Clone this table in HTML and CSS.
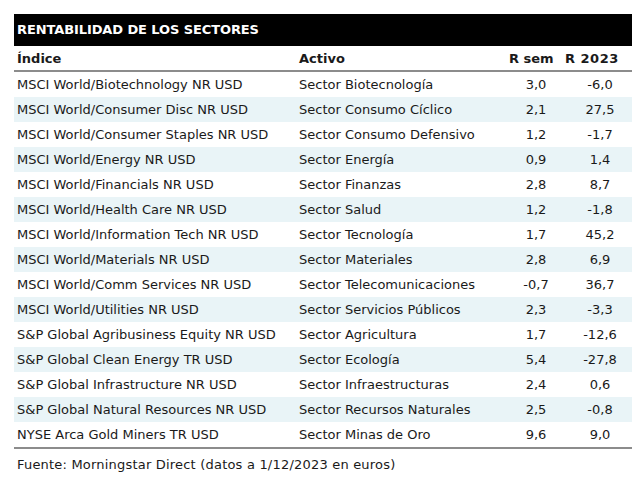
FILE: index.html
```html
<!DOCTYPE html>
<html lang="es">
<head>
<meta charset="utf-8">
<link rel="stylesheet" href="styles.css">
</head>
<body>
<div class="wrap">
  <div class="title">RENTABILIDAD DE LOS SECTORES</div>
  <table class="tbl">
    <colgroup>
      <col class="w1"><col class="w2"><col class="w3"><col class="w4">
    </colgroup>
    <thead>
      <tr><th class="c1">Índice</th><th class="c2">Activo</th><th class="c3">R sem</th><th class="c4">R 2023</th></tr>
    </thead>
    <tbody>
      <tr><td class="c1">MSCI World/Biotechnology NR USD</td><td class="c2">Sector Biotecnología</td><td class="c3">3,0</td><td class="c4">-6,0</td></tr>
      <tr><td class="c1">MSCI World/Consumer Disc NR USD</td><td class="c2">Sector Consumo Cíclico</td><td class="c3">2,1</td><td class="c4">27,5</td></tr>
      <tr><td class="c1">MSCI World/Consumer Staples NR USD</td><td class="c2">Sector Consumo Defensivo</td><td class="c3">1,2</td><td class="c4">-1,7</td></tr>
      <tr><td class="c1">MSCI World/Energy NR USD</td><td class="c2">Sector Energía</td><td class="c3">0,9</td><td class="c4">1,4</td></tr>
      <tr><td class="c1">MSCI World/Financials NR USD</td><td class="c2">Sector Finanzas</td><td class="c3">2,8</td><td class="c4">8,7</td></tr>
      <tr><td class="c1">MSCI World/Health Care NR USD</td><td class="c2">Sector Salud</td><td class="c3">1,2</td><td class="c4">-1,8</td></tr>
      <tr><td class="c1">MSCI World/Information Tech NR USD</td><td class="c2">Sector Tecnología</td><td class="c3">1,7</td><td class="c4">45,2</td></tr>
      <tr><td class="c1">MSCI World/Materials NR USD</td><td class="c2">Sector Materiales</td><td class="c3">2,8</td><td class="c4">6,9</td></tr>
      <tr><td class="c1">MSCI World/Comm Services NR USD</td><td class="c2">Sector Telecomunicaciones</td><td class="c3">-0,7</td><td class="c4">36,7</td></tr>
      <tr><td class="c1">MSCI World/Utilities NR USD</td><td class="c2">Sector Servicios Públicos</td><td class="c3">2,3</td><td class="c4">-3,3</td></tr>
      <tr><td class="c1">S&amp;P Global Agribusiness Equity NR USD</td><td class="c2">Sector Agricultura</td><td class="c3">1,7</td><td class="c4">-12,6</td></tr>
      <tr><td class="c1">S&amp;P Global Clean Energy TR USD</td><td class="c2">Sector Ecología</td><td class="c3">5,4</td><td class="c4">-27,8</td></tr>
      <tr><td class="c1">S&amp;P Global Infrastructure NR USD</td><td class="c2">Sector Infraestructuras</td><td class="c3">2,4</td><td class="c4">0,6</td></tr>
      <tr><td class="c1">S&amp;P Global Natural Resources NR USD</td><td class="c2">Sector Recursos Naturales</td><td class="c3">2,5</td><td class="c4">-0,8</td></tr>
      <tr><td class="c1">NYSE Arca Gold Miners TR USD</td><td class="c2">Sector Minas de Oro</td><td class="c3">9,6</td><td class="c4">9,0</td></tr>
    </tbody>
  </table>
  <div class="source">Fuente: Morningstar Direct (datos a 1/12/2023 en euros)</div>
</div>
</body>
</html>
```

FILE: styles.css
```css
html, body {
  margin: 0;
  padding: 0;
  background: #ffffff;
}
body {
  font-family: "DejaVu Sans", Verdana, sans-serif;
  font-size: 13px;
  color: #1a1a1a;
}
.wrap {
  width: 618px;
  margin: 14px 0 0 14px;
}
.title {
  background: #000000;
  color: #ffffff;
  font-weight: bold;
  letter-spacing: -0.1px;
  height: 32px;
  line-height: 32px;
  padding-left: 3px;
}
.tbl {
  width: 618px;
  border-collapse: collapse;
  table-layout: fixed;
}
.w1 { width: 282px; }
.w2 { width: 213px; }
.w3 { width: 54px; }
.w4 { width: 69px; }
.tbl th {
  font-weight: bold;
  height: 23px;
  padding: 1px 0 0 0;
  text-align: left;
  border-bottom: 2px solid #8c8c8c;
}
.tbl td {
  height: 25px;
  padding: 0;
}
.tbl tbody tr:nth-child(even) td {
  background: #e9f4f7;
}
.tbl tbody tr:last-child td {
  border-bottom: 2px solid #8c8c8c;
}
.tbl .c1 { padding-left: 3px; }
.tbl .c2 { padding-left: 3px; }
.tbl td.c3, .tbl td.c4 { text-align: center; }
.tbl td.c4 { padding-left: 5px; }
.tbl th.c3 { padding-left: 0; }
.tbl th.c4 { padding-left: 2px; letter-spacing: 0.5px; }
.source {
  padding: 6px 0 0 3px;
  line-height: 20px;
  letter-spacing: 0.2px;
}
```
